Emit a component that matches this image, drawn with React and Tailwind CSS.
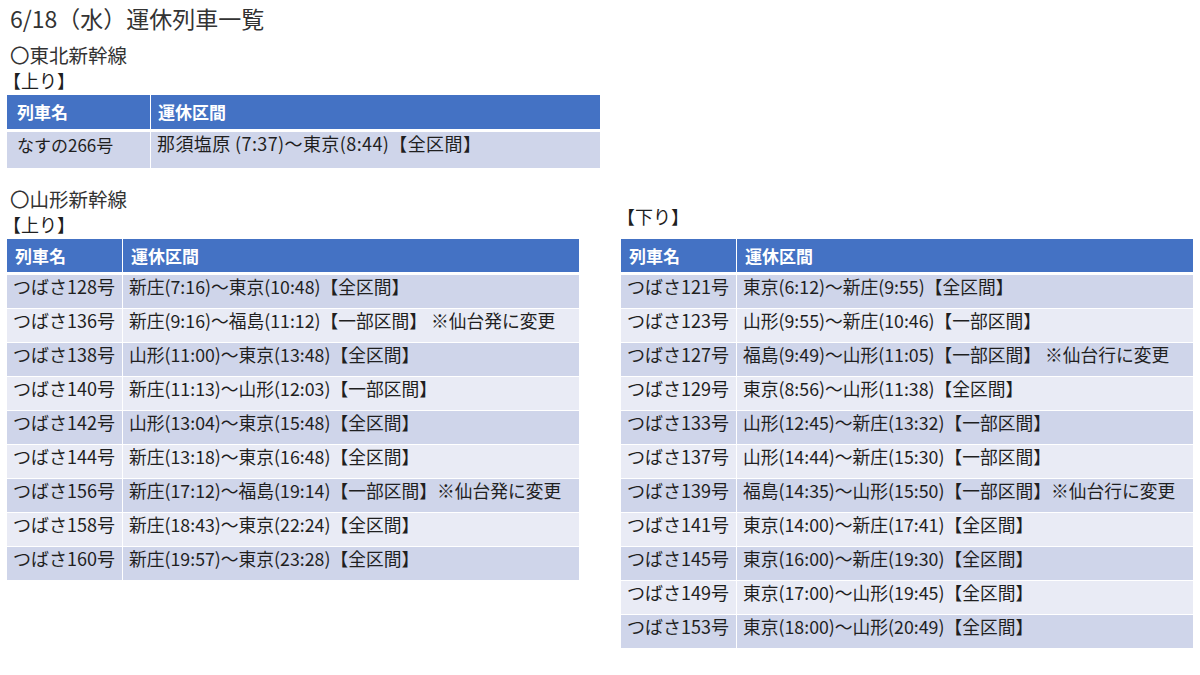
import React from "react";

const FONT = { fontFamily: '"Noto Sans CJK JP", "Noto Sans", sans-serif' };

const t1 = [["なすの266号", "那須塩原 (7:37)～東京(8:44)【全区間】"]];

const up = [
  ["つばさ128号", "新庄(7:16)～東京(10:48)【全区間】"],
  ["つばさ136号", "新庄(9:16)～福島(11:12)【一部区間】 ※仙台発に変更"],
  ["つばさ138号", "山形(11:00)～東京(13:48)【全区間】"],
  ["つばさ140号", "新庄(11:13)～山形(12:03)【一部区間】"],
  ["つばさ142号", "山形(13:04)～東京(15:48)【全区間】"],
  ["つばさ144号", "新庄(13:18)～東京(16:48)【全区間】"],
  ["つばさ156号", "新庄(17:12)～福島(19:14)【一部区間】※仙台発に変更"],
  ["つばさ158号", "新庄(18:43)～東京(22:24)【全区間】"],
  ["つばさ160号", "新庄(19:57)～東京(23:28)【全区間】"],
];

const down = [
  ["つばさ121号", "東京(6:12)～新庄(9:55)【全区間】"],
  ["つばさ123号", "山形(9:55)～新庄(10:46)【一部区間】"],
  ["つばさ127号", "福島(9:49)～山形(11:05)【一部区間】 ※仙台行に変更"],
  ["つばさ129号", "東京(8:56)～山形(11:38)【全区間】"],
  ["つばさ133号", "山形(12:45)～新庄(13:32)【一部区間】"],
  ["つばさ137号", "山形(14:44)～新庄(15:30)【一部区間】"],
  ["つばさ139号", "福島(14:35)～山形(15:50)【一部区間】※仙台行に変更"],
  ["つばさ141号", "東京(14:00)～新庄(17:41)【全区間】"],
  ["つばさ145号", "東京(16:00)～新庄(19:30)【全区間】"],
  ["つばさ149号", "東京(17:00)～山形(19:45)【全区間】"],
  ["つばさ153号", "東京(18:00)～山形(20:49)【全区間】"],
];

function SmallTable({ rows }) {
  return (
    <div className="w-[572px] flex flex-col">
      <div className="flex h-[36px] border-b-[3px] border-white bg-[#4472C4] text-white font-bold text-[17px] leading-[20px]">
        <div className="w-[116px] shrink-0 border-r border-white flex items-center pl-[8px]">列車名</div>
        <div className="flex-1 flex items-center pl-[8px]">運休区間</div>
      </div>
      {rows.map((r, i) => (
        <div
          key={i}
          className={
            "flex h-[34px] border-b border-white text-[18px] leading-[20px] text-[#1f1f1f] " +
            (i % 2 === 0 ? "bg-[#CFD5EA]" : "bg-[#E9EBF5]")
          }
        >
          <div className="w-[116px] shrink-0 border-r border-white pl-[6px] pt-[1px] whitespace-nowrap">{r[0]}</div>
          <div className="flex-1 pl-[6px] pt-[1px] whitespace-nowrap text-[17.75px]">{r[1]}</div>
        </div>
      ))}
    </div>
  );
}

export default function App() {
  return (
    <div className="w-[1200px] h-[675px] bg-white overflow-hidden text-[#262626]" style={FONT}>
      <div className="pl-[10px] pt-[4px] text-[23px] leading-[28px] text-[#333]">6/18（水）運休列車一覧</div>
      <div className="pl-[10px] mt-[10px] text-[19.5px] leading-[26px] text-[#333]">〇東北新幹線</div>
      <div className="pl-[3px] text-[18px] leading-[24px] text-[#1f1f1f]">【上り】</div>
      <div className="ml-[7px] mt-[3px] w-[593px] flex flex-col">
        <div className="flex h-[37px] border-b-[3px] border-white bg-[#4472C4] text-white font-bold text-[17px] leading-[20px]">
          <div className="w-[144px] shrink-0 border-r border-white flex items-center pl-[10px]">列車名</div>
          <div className="flex-1 flex items-center pl-[7px]">運休区間</div>
        </div>
        {t1.map((r, i) => (
          <div key={i} className="flex h-[36px] bg-[#CFD5EA] text-[17px] leading-[20px] text-[#1f1f1f]">
            <div className="w-[144px] shrink-0 border-r border-white pl-[10px] pt-[3px] whitespace-nowrap">{r[0]}</div>
            <div className="flex-1 pl-[6px] pt-[1px] whitespace-nowrap text-[18px] tracking-[0.4px]">{r[1]}</div>
          </div>
        ))}
      </div>
      <div className="flex mt-[18px]">
        <div className="flex flex-col w-[614px]">
          <div className="pl-[10px] text-[19.5px] leading-[26px] text-[#333]">〇山形新幹線</div>
          <div className="pl-[3px] text-[18px] leading-[24px] text-[#1f1f1f]">【上り】</div>
          <div className="ml-[7px] mt-[3px]">
            <SmallTable rows={up} />
          </div>
        </div>
        <div className="flex flex-col">
          <div className="pl-[3px] mt-[18px] text-[18px] leading-[24px] text-[#1f1f1f]">【下り】</div>
          <div className="ml-[7px] mt-[11px]">
            <SmallTable rows={down} />
          </div>
        </div>
      </div>
    </div>
  );
}
